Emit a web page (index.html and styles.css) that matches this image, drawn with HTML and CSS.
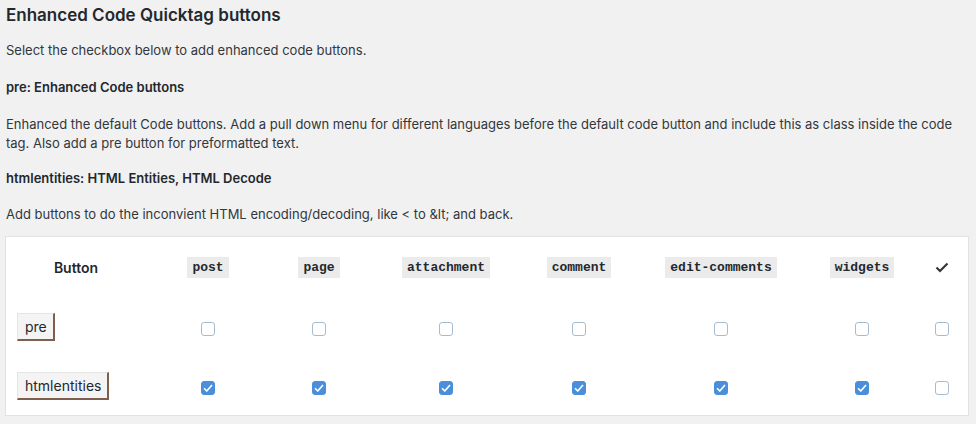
FILE: index.html
```html
<!DOCTYPE html>
<html lang="en">
<head>
<meta charset="utf-8">
<title>Enhanced Code Quicktag buttons</title>
<link rel="stylesheet" href="styles.css">
</head>
<body>
<div class="wrap">
  <h2 class="title">Enhanced Code Quicktag buttons</h2>
  <p class="text intro">Select the checkbox below to add enhanced code buttons.</p>
  <h3 class="sub sub-pre">pre: Enhanced Code buttons</h3>
  <p class="text">Enhanced the default Code buttons. Add a pull down menu for different languages before the default code button and include this as class inside the code tag. Also add a pre button for preformatted text.</p>
  <h3 class="sub sub-html">htmlentities: HTML Entities, HTML Decode</h3>
  <p class="text last">Add buttons to do the inconvient HTML encoding/decoding, like &lt; to &amp;lt; and back.</p>
  <div class="box">
    <table class="grid">
      <colgroup>
        <col class="c-btn"><col class="c-post"><col class="c-page"><col class="c-att"><col class="c-com"><col class="c-edit"><col class="c-wid"><col class="c-all">
      </colgroup>
      <thead>
        <tr>
          <th class="head-btn">Button</th>
          <th><code>post</code></th>
          <th><code>page</code></th>
          <th><code>attachment</code></th>
          <th><code>comment</code></th>
          <th><code>edit-comments</code></th>
          <th><code>widgets</code></th>
          <th><svg class="tick" width="14" height="11" viewBox="0 0 14 11"><polyline points="1.5,5.5 5,9 12.5,1.5" fill="none" stroke="#32373c" stroke-width="2.2"/></svg></th>
        </tr>
      </thead>
      <tbody>
        <tr>
          <td class="cell-btn"><span class="qt">pre</span></td>
          <td><span class="cb"></span></td>
          <td><span class="cb"></span></td>
          <td><span class="cb"></span></td>
          <td><span class="cb"></span></td>
          <td><span class="cb"></span></td>
          <td><span class="cb"></span></td>
          <td><span class="cb"></span></td>
        </tr>
        <tr>
          <td class="cell-btn"><span class="qt">htmlentities</span></td>
          <td><span class="cb on"><svg width="10" height="8" viewBox="0 0 10 8"><polyline points="1,4.2 3.8,7 9,1" fill="none" stroke="#fff" stroke-width="1.6"/></svg></span></td>
          <td><span class="cb on"><svg width="10" height="8" viewBox="0 0 10 8"><polyline points="1,4.2 3.8,7 9,1" fill="none" stroke="#fff" stroke-width="1.6"/></svg></span></td>
          <td><span class="cb on"><svg width="10" height="8" viewBox="0 0 10 8"><polyline points="1,4.2 3.8,7 9,1" fill="none" stroke="#fff" stroke-width="1.6"/></svg></span></td>
          <td><span class="cb on"><svg width="10" height="8" viewBox="0 0 10 8"><polyline points="1,4.2 3.8,7 9,1" fill="none" stroke="#fff" stroke-width="1.6"/></svg></span></td>
          <td><span class="cb on"><svg width="10" height="8" viewBox="0 0 10 8"><polyline points="1,4.2 3.8,7 9,1" fill="none" stroke="#fff" stroke-width="1.6"/></svg></span></td>
          <td><span class="cb on"><svg width="10" height="8" viewBox="0 0 10 8"><polyline points="1,4.2 3.8,7 9,1" fill="none" stroke="#fff" stroke-width="1.6"/></svg></span></td>
          <td><span class="cb"></span></td>
        </tr>
      </tbody>
    </table>
  </div>
</div>
</body>
</html>
```
FILE: styles.css
```css
html, body {
  margin: 0;
  padding: 0;
  background: #f1f1f1;
}
body {
  font-family: Inter, "Liberation Sans", Arial, sans-serif;
  font-size: 13px;
  line-height: 19px;
  color: #32373c;
}
.wrap {
  padding: 3px 7px 0 5px;
}
.title {
  margin: 0 0 0 1px;
  font-size: 17px;
  line-height: 24px;
  font-weight: 600;
  color: #23282d;
}
.text {
  margin: 18px 0 0 1px;
}
.text.intro { margin-top: 14px; }
.text.last { margin-top: 17px; }
.sub {
  margin: 16px 0 0 1px;
  font-size: 13px;
  line-height: 19px;
  font-weight: 600;
  color: #23282d;
}
.sub.sub-pre { margin-top: 18px; }
.box {
  margin-top: 12px;
  background: #fff;
  border: 1px solid #e2e2e2;
}
.grid {
  width: 100%;
  border-collapse: collapse;
  table-layout: fixed;
}
.c-btn { width: 140px; }
.c-post { width: 124px; }
.c-page { width: 98px; }
.c-att { width: 156px; }
.c-com { width: 110px; }
.c-edit { width: 174px; }
.c-wid { width: 108px; }
.grid th, .grid td {
  padding: 0;
  height: 59px;
  text-align: center;
  vertical-align: middle;
}
.grid thead th {
  height: 60px;
}
.grid th {
  font-size: 14px;
  font-weight: 600;
  color: #23282d;
}
.grid code {
  display: inline-block;
  font-family: "Liberation Mono", "DejaVu Sans Mono", monospace;
  font-size: 13px;
  line-height: 21px;
  font-weight: 700;
  padding: 0 5px;
  background: #ebebeb;
  color: #23282d;
}
.tick { display: block; margin: 0 auto; }
.grid .cell-btn {
  text-align: left;
  padding-left: 11px;
}
.qt {
  display: inline-block;
  padding: 3px 6px 3px 7px;
  font-size: 14px;
  line-height: 19px;
  background: #f4f4f4;
  border-top: 1px solid #e4e4e4;
  border-left: 1px solid #e4e4e4;
  border-right: 2px solid #7f5e4d;
  border-bottom: 2px solid #7f5e4d;
  color: #23282d;
}
.cb {
  display: inline-flex;
  align-items: center;
  justify-content: center;
  width: 12px;
  height: 12px;
  margin-top: 4px;
  border: 1px solid #a7bccf;
  border-radius: 3px;
  background: #fff;
  vertical-align: middle;
}
.cb.on {
  background: #4a8fd9;
  border-color: #4a8fd9;
}
.cb svg { display: block; }
```
